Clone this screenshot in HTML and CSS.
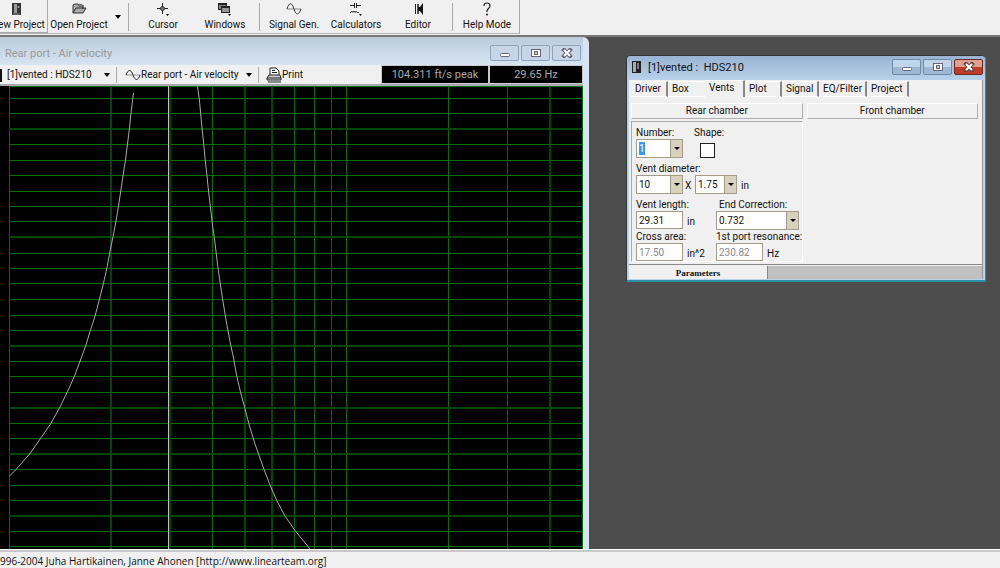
FILE: index.html
```html
<!DOCTYPE html>
<html lang="en">
<head>
  <meta charset="UTF-8">
  <meta name="viewport" content="width=device-width, initial-scale=1.0">
  <title>WinISD</title>
  <link rel="stylesheet" href="styles.css">
</head>
<body>

  <header class="toolbar">
    <div class="toolbar-inner">
      <button class="tool raised">
        <svg width="16" height="16" viewBox="0 0 16 16"><rect x="4" y="3" width="9" height="12" fill="#333"/><rect x="6" y="4" width="3" height="9" fill="#999"/><circle cx="10.500" cy="7" r="1" fill="#aaa"/><path d="M5 14h7" stroke="#888"/></svg>
        ew Project
      </button>
      <button class="tool">
        <svg width="16" height="16" viewBox="0 0 16 16"><path d="M2 13V5l2-1h3l1 2h4v3M2 13l3-5h10l-3 5z" fill="#aaa" stroke="#333"/><path d="M8 4l3 1 2 1" stroke="#555" fill="none"/></svg>
        Open Project
      </button>
      <button class="tool-arrow" aria-label="Recent projects"><span class="arrow"></span></button>
      <span class="divider"></span>
      <button class="tool">
        <svg width="16" height="16" viewBox="0 0 16 16"><path d="M7.500 3v11M2 8.500h11" stroke="#222"/><circle cx="7.500" cy="8.500" r="2" fill="#777" stroke="#333"/><path d="M11 14h3l-1.500 2z"/></svg>
        Cursor
      </button>
      <button class="tool">
        <svg width="16" height="16" viewBox="0 0 16 16"><rect x="1.500" y="3.500" width="8" height="6" fill="#888" stroke="#222"/><path d="M2 4.500h8" stroke="#222"/><rect x="4.500" y="6.500" width="8" height="6" fill="#999" stroke="#222"/><path d="M4 7h9" stroke="#222" stroke-width="2"/><path d="M11 14h3l-1.500 2z"/></svg>
        Windows
      </button>
      <span class="divider"></span>
      <button class="tool">
        <svg width="16" height="16" viewBox="0 0 16 16"><path d="M1 9h14" stroke="#888"/><path d="M1 9C3 2 6 2 8 9s5 6 7 0" fill="none" stroke="#333"/></svg>
        Signal Gen.
      </button>
      <button class="tool">
        <svg width="16" height="16" viewBox="0 0 16 16"><path d="M2 5.500h4M9 5.500h4M6.500 3v5M8.500 3v5" stroke="#222"/><path d="M2 12.500h1q1-3 2 0q1-3 2 0q1-3 2 0h2" fill="none" stroke="#444"/><path d="M11 14h3l-1.500 2z"/></svg>
        Calculators
      </button>
      <button class="tool">
        <svg width="16" height="16" viewBox="0 0 16 16"><path d="M5.500 4v10" stroke="#222"/><path d="M7 4h2v10H7z" fill="#555"/><path d="M8 7h2l3-4v12l-3-4H8z" fill="#111"/></svg>
        Editor
      </button>
      <span class="divider"></span>
      <button class="tool">
        <svg width="16" height="16" viewBox="0 0 16 16"><path d="M5 6q0-3 3-3t3 3q0 1-1.500 2.500T8 11v1" fill="none" stroke="#222" stroke-width="1.200"/><circle cx="8" cy="14.500" r="1" fill="#222"/></svg>
        Help Mode
      </button>
    </div>
  </header>

  <main class="desktop">

    <section class="window plot-window">
      <div class="titlebar">
        <h2>Rear port - Air velocity</h2>
        <div class="caption-buttons">
          <button aria-label="Minimize"><svg width="12" height="10" viewBox="0 0 12 10"><rect x="1.500" y="5.500" width="9" height="3" rx="1" fill="#fff" stroke="#667"/></svg></button>
          <button aria-label="Maximize"><svg width="12" height="10" viewBox="0 0 12 10"><rect x="1.500" y="1.500" width="9" height="7" fill="#fff" stroke="#667"/><rect x="4.500" y="3.500" width="3" height="3" fill="#bcd" stroke="#667"/></svg></button>
          <button aria-label="Close"><svg width="12" height="10" viewBox="0 0 12 10"><path d="M3 2l6 6M9 2L3 8" stroke="#667" stroke-width="4" stroke-linecap="square"/><path d="M3 2l6 6M9 2L3 8" stroke="#fff" stroke-width="2"/></svg></button>
        </div>
      </div>

      <div class="plot-toolbar">
        <button class="pick pick-project"><svg width="2" height="14" viewBox="0 0 2 14"><rect width="2" height="13" y="1" fill="#111"/></svg>[1]vented : HDS210<span class="arrow"></span></button>
        <span class="divider"></span>
        <button class="pick pick-graph"><svg width="16" height="14" viewBox="0 0 16 14"><path d="M1 7h14" stroke="#999"/><path d="M1 7C3 1 6 1 8 7s5 6 7 0" fill="none" stroke="#222"/></svg>Rear port - Air velocity<span class="arrow"></span></button>
        <span class="divider"></span>
        <button class="pick pick-print"><svg width="16" height="16" viewBox="0 0 16 16"><path d="M4 8V1h6l3 3v4" fill="#fff" stroke="#222"/><path d="M6 3.500h3M6 5.500h5" stroke="#222"/><path d="M3 8h11l1 3v2H1v-2z" fill="#ccc" stroke="#222"/><path d="M2 15h13M1 11h14" stroke="#222"/></svg>Print</button>
        <output class="readout readout-value">104.311 ft/s peak</output>
        <output class="readout readout-freq">29.65 Hz</output>
      </div>

      <svg class="plot" width="583" height="463" viewBox="0 86 583 463">
        <!-- frequency and level grid -->
        <g class="grid">
          <path d="M9.500 86v463M212.500 86v463M294.500 86v463M314.500 86v463M331.500 86v463M346.500 86v463M448.500 86v463M507.500 86v463M582.500 86v463"/>
          <path d="M9 98.500h574M9 113.500h574M9 144.500h574M9 160.500h574M9 175.500h574M9 191.500h574M9 206.500h574M9 221.500h574M9 253.500h574M9 268.500h574M9 283.500h574M9 299.500h574M9 315.500h574M9 330.500h574M9 361.500h574M9 376.500h574M9 392.500h574M9 423.500h574M9 438.500h574M9 469.500h574M9 485.500h574M9 500.500h574M9 531.500h574M9 546.500h574M9 86.500h574"/>
        </g>
        <g class="grid grid-soft">
          <path d="M111 86v463M170 86v463M245 86v463M272 86v463M550 86v463"/>
          <path d="M9 129h574M9 237h574M9 346h574M9 408h574M9 454h574M9 516h574"/>
        </g>
        <path class="cursor-line" d="M168.500 86v463"/>
        <polyline class="curve" points="9.500,476 16,469.500 30.500,453 41.500,437 50.500,424 60,407 67.500,391.500 74.500,376 80.500,360 86,345 90,331.500 94.500,318 99.500,299 103.500,283 107,267.500 110,251.500 113,236.500 116,221 118.500,206 123,176 125.500,160 127.500,144 129.500,128 131,113 133.500,93"/>
        <polyline class="curve" points="197.500,86 199.500,101 201.500,123 203.500,142 205,158 207,176 208.500,191 210.500,208 212.500,225 215,243 218,268 221.500,292 226,320 230,341.500 233.500,358 236.500,375 240.500,392 245,409 249.500,426 255,444 263.500,468 270,485 276.500,500 285,516 295,530.500 310,549"/>
      </svg>
    </section>

    <section class="window project-window">
      <div class="titlebar">
        <svg width="10" height="13" viewBox="0 0 10 13"><rect width="9" height="12" fill="#222"/><rect x="1" y="1" width="3" height="10" fill="#aaa"/><rect x="5" y="2" width="2" height="6" fill="#777"/></svg>
        <h2>[1]vented :&nbsp; HDS210</h2>
        <div class="caption-buttons">
          <button aria-label="Minimize"><svg width="12" height="10" viewBox="0 0 12 10"><rect x="1.500" y="5.500" width="9" height="3" rx="1" fill="#fff" stroke="#667"/></svg></button>
          <button aria-label="Maximize"><svg width="12" height="10" viewBox="0 0 12 10"><rect x="1.500" y="1.500" width="9" height="7" fill="#fff" stroke="#667"/><rect x="4.500" y="3.500" width="3" height="3" fill="#bcd" stroke="#667"/></svg></button>
          <button class="close" aria-label="Close"><svg width="12" height="10" viewBox="0 0 12 10"><path d="M3 2l6 6M9 2L3 8" stroke="#644" stroke-width="4" stroke-linecap="square"/><path d="M3 2l6 6M9 2L3 8" stroke="#fff" stroke-width="2"/></svg></button>
        </div>
      </div>

      <div class="client">
        <nav class="tabs">
          <button>Driver</button>
          <button>Box</button>
          <button class="active">Vents</button>
          <button>Plot</button>
          <button>Signal</button>
          <button>EQ/Filter</button>
          <button>Project</button>
        </nav>

        <div class="chambers">
          <div class="chamber">
            <button class="chamber-head">Rear chamber</button>
            <form class="vent-form">
              <div class="field-row">
                <div class="field">
                  <label for="number">Number:</label>
                  <span class="combo"><select id="number" class="selected-text"><option>1</option></select></span>
                </div>
                <div class="field shape">
                  <label for="shape">Shape:</label>
                  <input type="checkbox" id="shape">
                </div>
              </div>

              <div class="field">
                <label for="width">Vent diameter:</label>
                <div class="controls">
                  <span class="combo"><select id="width"><option>10</option></select></span>
                  <span class="times">X</span>
                  <span class="combo combo-small"><select id="height" aria-label="Vent height"><option>1.75</option></select></span>
                  <span class="unit">in</span>
                </div>
              </div>

              <div class="field-row">
                <div class="field">
                  <label for="length">Vent length:</label>
                  <div class="controls"><input type="text" id="length" value="29.31"><span class="unit">in</span></div>
                </div>
                <div class="field">
                  <label class="indent" for="correction">End Correction:</label>
                  <span class="combo combo-wide"><select id="correction"><option>0.732</option></select></span>
                </div>
              </div>

              <div class="field-row last">
                <div class="field">
                  <label for="area">Cross area:</label>
                  <div class="controls"><input type="text" id="area" value="17.50" disabled><span class="unit">in^2</span></div>
                </div>
                <div class="field">
                  <label for="resonance">1st port resonance:</label>
                  <div class="controls"><input type="text" id="resonance" value="230.82" disabled><span class="unit">Hz</span></div>
                </div>
              </div>
            </form>
          </div>
          <div class="chamber">
            <button class="chamber-head">Front chamber</button>
          </div>
        </div>

        <div class="bottom-tabs">
          <button>Parameters</button>
        </div>
      </div>
    </section>

  </main>

  <footer class="statusbar">
    996-2004 Juha Hartikainen, Janne Ahonen [http://www.linearteam.org]
  </footer>

</body>
</html>
```
FILE: styles.css
```css
* {
  box-sizing: border-box;
}

body {
  margin: 0;
  height: 100vh;
  display: flex;
  flex-direction: column;
  overflow: hidden;
  background: #4d4d4d;
  color: #111;
  font-family: Roboto, Arial, sans-serif;
  font-size: 10px;
  line-height: 12px;
}

button,
input,
select {
  font: inherit;
  color: inherit;
  margin: 0;
}

button {
  border: none;
  padding: 0;
  background: none;
  white-space: nowrap;
}

h2 {
  margin: 0;
  font-weight: normal;
}

svg {
  display: block;
  flex: none;
}

/* main toolbar */

.toolbar {
  flex: none;
  height: 37px;
  background: #f0f0f0;
  border-bottom: 2px solid #777;
}

.toolbar-inner {
  display: flex;
  align-items: center;
  width: 520px;
  height: 34px;
  border-right: 1px solid #a8a8a8;
  border-bottom: 1px solid #b4b4b4;
}

.tool {
  display: flex;
  flex-direction: column;
  align-items: center;
  gap: 3px;
  width: 62px;
  height: 33px;
}

.raised {
  width: 48px;
  padding-right: 4px;
  border-right: 1px solid #aaa;
  border-bottom: 1px solid #aaa;
}

.raised svg {
  margin-right: 12px;
}

.tool-arrow {
  width: 15px;
  height: 32px;
  display: flex;
  align-items: center;
  justify-content: center;
}

.arrow {
  border: 3px solid transparent;
  border-top: 4px solid #000;
  border-bottom: none;
}

.divider {
  width: 1px;
  height: 28px;
  margin: 0 3px;
  background: #aaa;
}

/* desktop and windows */

.desktop {
  position: relative;
  flex: 1;
  overflow: hidden;
}

.window {
  position: absolute;
}

.titlebar {
  display: flex;
  align-items: center;
}

.titlebar h2 {
  flex: 1;
  padding-top: 2px;
  font-size: 11px;
  line-height: 16px;
}

.caption-buttons {
  display: flex;
  gap: 2px;
}

.caption-buttons button {
  display: flex;
  align-items: center;
  justify-content: center;
  width: 29px;
  height: 16px;
  border: 1px solid #8fa3bd;
  border-radius: 2px;
  background: #c6d6e8;
}

/* plot window */

.plot-window {
  left: 0;
  top: 0;
  width: 589px;
  height: 100%;
  padding-right: 6px;
  border-radius: 0 6px 0 0;
  background: #d7e4f2;
}

.plot-window .titlebar {
  height: 28px;
  padding: 4px 2px 0 5px;
  background: linear-gradient(#bccbdb, #d7e4f2);
}

.plot-window h2 {
  color: #999;
}

.plot-toolbar {
  display: flex;
  align-items: center;
  height: 21px;
  background: #f0f0f0;
  border-bottom: 2px solid #aaa;
}

.plot-toolbar .divider {
  height: 16px;
}

.pick {
  display: flex;
  align-items: center;
  height: 18px;
}

.pick .arrow {
  margin-left: auto;
  margin-right: 3px;
}

.pick-project {
  width: 113px;
  gap: 5px;
}

.pick-graph {
  width: 135px;
  padding-left: 5px;
}

.pick-print {
  padding-left: 4px;
}

.readout {
  height: 19px;
  border: 1px solid #c8c8c8;
  background: #000;
  color: #aaa;
  font-size: 11px;
  line-height: 18px;
  text-align: center;
}

.readout-value {
  width: 108px;
  margin-left: auto;
}

.readout-freq {
  width: 94px;
}

.plot {
  background: #000;
}

.grid {
  fill: none;
  stroke: #007000;
  stroke-width: 1;
}

.grid-soft {
  stroke: #004800;
  stroke-width: 2;
}

.cursor-line {
  stroke: #c0c0c0;
}

.curve {
  fill: none;
  stroke: #a8a8a8;
}

/* project window */

.project-window {
  left: 626px;
  top: 18px;
  width: 360px;
  padding: 0 2px 1px;
  border: 1px solid #333;
  border-right-color: #2b8fa6;
  border-bottom: 2px solid #2b8fa6;
  border-radius: 5px 5px 0 0;
  background: #b4d4ec;
}

.project-window .titlebar {
  height: 24px;
  gap: 6px;
  margin: 0 -2px;
  padding: 0 2px 2px 5px;
  border-radius: 4px 4px 0 0;
  background: linear-gradient(#98b4d2, #b9d1ea);
}

.project-window .caption-buttons button {
  border-color: #6f89a8;
  background: linear-gradient(#c0d4ea 50%, #9db8d4 50%);
}

.project-window .caption-buttons .close {
  border-color: #6a2a22;
  background: linear-gradient(#e0a090 50%, #c03c22 50%);
}

.client {
  background: #f0f0f0;
  border-right: 1px solid #999;
}

.tabs {
  display: flex;
  align-items: flex-end;
  height: 17px;
  padding-left: 2px;
}

.tabs button {
  width: 37px;
  height: 16px;
  padding: 0 4px;
  border-top: 1px solid #fff;
  border-right: 2px solid #888;
  border-bottom: 1px solid #fff;
  text-align: left;
}

.tabs button:nth-child(2) {
  border-right: none;
}

.tabs .active {
  width: 40px;
  height: 17px;
  padding-bottom: 2px;
  border-bottom: none;
}

.tabs button:nth-child(6) {
  width: 48px;
}

.tabs button:nth-child(7) {
  width: 42px;
}

.chambers {
  display: grid;
  grid-template-columns: minmax(0, 1fr) minmax(0, 1fr);
  gap: 4px;
  padding: 6px 4px 2px 2px;
  border-bottom: 1px solid #888;
}

.chamber-head {
  display: block;
  width: 100%;
  height: 16px;
  border: 1px solid #b0b0b0;
  border-top-color: #fff;
  border-left-color: #fff;
}

.vent-form {
  display: flex;
  flex-direction: column;
  gap: 5px;
  margin-top: 2px;
  padding: 5px 0 0 4px;
  border: 1px solid #fff;
  border-top-color: #aaa;
  border-left-color: #aaa;
}

.field-row {
  display: grid;
  grid-template-columns: 80px 1fr;
}

.field-row.last {
  margin-top: -4px;
}

.field {
  white-space: nowrap;
}

.field label {
  display: block;
}

.shape {
  margin-left: -22px;
}

.indent {
  padding-left: 3px;
}

.controls {
  display: flex;
}

.combo {
  display: block;
  position: relative;
  width: 47px;
  height: 19px;
}

.combo-small {
  width: 42px;
}

.combo-wide {
  width: 83px;
}

.combo select,
.field input[type="text"] {
  width: 100%;
  height: 19px;
  padding: 0 2px;
  appearance: none;
  border: 1px solid #a39c88;
  border-radius: 0;
  background: #fff;
}

.field input[type="text"] {
  width: 47px;
  height: 18px;
}

.field input[type="text"]:disabled {
  color: #888;
}

.combo::before {
  content: "";
  position: absolute;
  right: 1px;
  top: 1px;
  width: 11px;
  height: 17px;
  background: #d6d2be;
  border-left: 1px solid #a39c88;
  pointer-events: none;
}

.combo::after {
  content: "";
  position: absolute;
  right: 3px;
  top: 8px;
  border: 3px solid transparent;
  border-top: 3px solid #000;
  border-bottom: none;
  pointer-events: none;
}

.combo .selected-text {
  color: #fff;
  background: linear-gradient(#3399ff, #3399ff) 2px 2px / 6px 13px no-repeat #fff;
}

.field input[type="checkbox"] {
  display: block;
  appearance: none;
  width: 15px;
  height: 15px;
  margin: 4px 0 0 6px;
  border: 1px solid #222;
  background: #fff;
}

.times {
  width: 12px;
  padding: 5px 0 0 2px;
}

.unit {
  padding: 5px 0 0 4px;
}

.bottom-tabs {
  display: flex;
  height: 13px;
  margin-top: 1px;
  background: #c0c0c0;
}

.bottom-tabs button {
  width: 139px;
  height: 13px;
  background: #f0f0f0;
  border-right: 1px solid #888;
  font-family: "Liberation Serif", serif;
  font-size: 9px;
  font-weight: bold;
  line-height: 10px;
}

/* status bar */

.statusbar {
  flex: none;
  height: 19px;
  padding-top: 4px;
  border-top: 1px solid #fff;
  background: #f0f0f0;
  box-shadow: inset 0 2px 0 #c8c8c8;
  font-family: "Open Sans", sans-serif;
  font-size: 10px;
  line-height: 14px;
  white-space: nowrap;
}
```
